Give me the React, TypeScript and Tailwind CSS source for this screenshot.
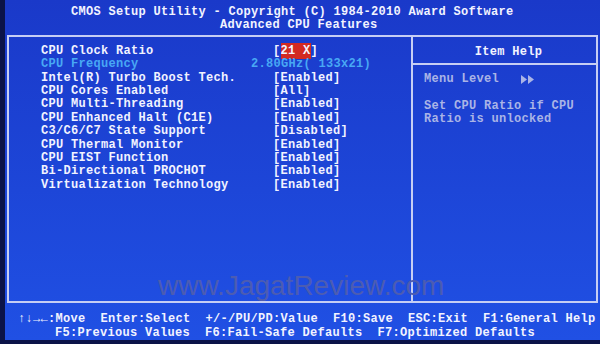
const rows: { label: string; value: string; kind?: "ratio" | "freq" }[] = [
  { label: "CPU Clock Ratio", value: "21 X", kind: "ratio" },
  { label: "CPU Frequency", value: "2.80GHz( 133x21)", kind: "freq" },
  { label: "Intel(R) Turbo Boost Tech.", value: "[Enabled]" },
  { label: "CPU Cores Enabled", value: "[All]" },
  { label: "CPU Multi-Threading", value: "[Enabled]" },
  { label: "CPU Enhanced Halt (C1E)", value: "[Enabled]" },
  { label: "C3/C6/C7 State Support", value: "[Disabled]" },
  { label: "CPU Thermal Monitor", value: "[Enabled]" },
  { label: "CPU EIST Function", value: "[Enabled]" },
  { label: "Bi-Directional PROCHOT", value: "[Enabled]" },
  { label: "Virtualization Technology", value: "[Enabled]" },
];

function SettingRow({ label, value, kind }: (typeof rows)[number]) {
  if (kind === "freq") {
    return (
      <div className="flex h-[13.4px] items-center text-[#48a8f4]">
        <span className="w-[232px] shrink-0">{label}</span>
        <span className="-ml-[22px]">{value}</span>
      </div>
    );
  }
  return (
    <div className="flex h-[13.4px] items-center">
      <span className="w-[232px] shrink-0">{label}</span>
      {kind === "ratio" ? (
        <span>
          [<span className="bg-[#d22a22] py-[1px]">{value}</span>]
        </span>
      ) : (
        <span>{value}</span>
      )}
    </div>
  );
}

function MenuArrows() {
  return (
    <svg width="14" height="9" viewBox="0 0 14 9" aria-hidden>
      <path d="M0 0 L6 4.5 L0 9 Z" fill="#aab4e6" />
      <path d="M7 0 L13 4.5 L7 9 Z" fill="#aab4e6" />
    </svg>
  );
}

export default function App() {
  return (
    <div className="relative h-[344px] w-[600px] overflow-hidden bg-[#0b1348] font-['Liberation_Mono',monospace] text-[12px] font-bold leading-[13.4px] tracking-[0.3px] text-[#f2f3ff]">
      <div className="ml-[5px] flex h-[340px] flex-col bg-linear-to-b from-[#1a39c9] to-[#2050e4] whitespace-pre">
        <div className="flex flex-col pt-[6px]">
          <div className="ml-[66px]">CMOS Setup Utility - Copyright (C) 1984-2010 Award Software</div>
          <div className="ml-[215px]">Advanced CPU Features</div>
        </div>

        <div className="mt-[2px] ml-[2px] flex h-[269px] w-[591px] border-2 border-[#c6cef4]">
          <div className="w-[404px] shrink-0 border-r-2 border-[#c6cef4] pt-[8px] pl-[32px]">
            {rows.map((r) => (
              <SettingRow key={r.label} {...r} />
            ))}
          </div>
          <div className="flex flex-1 flex-col">
            <div className="flex h-[28px] items-center justify-center border-b-2 border-[#c6cef4] pt-[6px] pl-[8px]">
              Item Help
            </div>
            <div className="pt-[8px] pl-[11px] text-[#aab4e6]">
              <div className="flex h-[13.4px] items-center">
                <span className="w-[97px] shrink-0">Menu Level</span>
                <MenuArrows />
              </div>
              <div className="h-[13.4px]" />
              <div>Set CPU Ratio if CPU</div>
              <div>Ratio is unlocked</div>
            </div>
          </div>
        </div>

        <div className="mt-[10px] flex flex-col">
          <div className="ml-[13px]">↑↓→←:Move  Enter:Select  +/-/PU/PD:Value  F10:Save  ESC:Exit  F1:General Help</div>
          <div className="ml-[50px]">F5:Previous Values  F6:Fail-Safe Defaults  F7:Optimized Defaults</div>
        </div>
      </div>

      <div className="pointer-events-none absolute top-[270px] left-[158px] font-['Liberation_Sans',sans-serif] text-[28px] leading-[32px] font-normal tracking-normal text-[#4c5cb2]">
        www.JagatReview.com
      </div>
    </div>
  );
}
